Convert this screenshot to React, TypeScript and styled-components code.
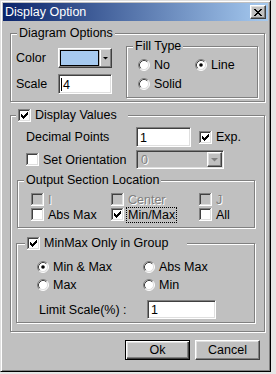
import React from 'react';
import styled, { createGlobalStyle, css } from 'styled-components';

const GlobalStyle = createGlobalStyle`
  html, body {
    margin: 0;
    padding: 0;
    background: #e6e6e6;
  }
  body {
    font-family: "Liberation Sans", Arial, sans-serif;
    font-size: 12.5px;
    color: #000;
  }
`;

const raised = css`
  border: 1px solid;
  border-color: #fff #404040 #404040 #fff;
  box-shadow: inset -1px -1px #808080, inset 1px 1px #dfdfdf;
`;

const sunken = css`
  border: 1px solid;
  border-color: #808080 #fff #fff #808080;
  box-shadow: inset 1px 1px #404040, inset -1px -1px #dfdfdf;
`;

const Check = ({ checked, disabled }: { checked?: boolean; disabled?: boolean }) => (
  <svg width="13" height="13" viewBox="0 0 13 13" shapeRendering="crispEdges" style={{ flex: 'none' }}>
    <rect width="13" height="13" fill="#fff" />
    <rect width="12" height="12" fill="#808080" />
    <rect x="1" y="1" width="11" height="11" fill="#dfdfdf" />
    <rect x="1" y="1" width="10" height="10" fill="#404040" />
    <rect x="2" y="2" width="9" height="9" fill={disabled ? '#c0c0c0' : '#fff'} />
    {checked && (
      <path
        d="M9 3h1v1H9z M8 4h2v1H8z M3 5h1v1H3z M7 5h3v1H7z M3 6h2v1H3z M6 6h3v1H6z M3 7h5v1H3z M4 8h3v1H4z M5 9h1v1H5z"
        fill="#000"
      />
    )}
  </svg>
);

const Radio = ({ checked }: { checked?: boolean }) => (
  <svg width="12" height="12" viewBox="0 0 12 12" style={{ flex: 'none' }}>
    <circle cx="6" cy="6" r="5" fill="#fff" />
    <path d="M2.11 9.89 A5.5 5.5 0 0 1 9.89 2.11" fill="none" stroke="#808080" />
    <path d="M9.89 2.11 A5.5 5.5 0 0 1 2.11 9.89" fill="none" stroke="#fff" />
    <path d="M2.82 9.18 A4.5 4.5 0 0 1 9.18 2.82" fill="none" stroke="#404040" />
    <path d="M9.18 2.82 A4.5 4.5 0 0 1 2.82 9.18" fill="none" stroke="#dfdfdf" />
    {checked && <circle cx="6" cy="6" r="1.8" fill="#000" />}
  </svg>
);

const Arrow = ({ w, color }: { w: number; color: string }) => (
  <svg width={w} height={Math.ceil(w / 2)} viewBox={`0 0 ${w} ${Math.ceil(w / 2)}`}>
    <polygon points={`0,0 ${w},0 ${w / 2},${w / 2}`} fill={color} />
  </svg>
);

export default function App() {
  return (
    <>
      <GlobalStyle />
      <Window>
        <TitleBar>
          <TitleText>Display Option</TitleText>
          <CloseButton>
            <svg width="8" height="7" viewBox="0 0 8 7" shapeRendering="crispEdges">
              <path
                d="M0 0h2v1H0z M6 0h2v1H6z M1 1h2v1H1z M5 1h2v1H5z M2 2h4v1H2z M3 3h2v1H3z M2 4h4v1H2z M1 5h2v1H1z M5 5h2v1H5z M0 6h2v1H0z M6 6h2v1H6z"
                fill="#000"
              />
            </svg>
          </CloseButton>
        </TitleBar>

        <Body>
          <Group $w={255} $h={69}>
            <Legend $left={6}>Diagram Options</Legend>
            <DiagramBody>
              <FieldGrid>
                <span>Color</span>
                <ColorButton>
                  <Swatch />
                  <ComboArrow>
                    <Arrow w={5} color="#000" />
                  </ComboArrow>
                </ColorButton>
                <span>Scale</span>
                <TextBox $w={54} $h={20}>
                  <Caret />4
                </TextBox>
              </FieldGrid>

              <Group $w={132} $h={52} style={{ marginLeft: 14 }}>
                <Legend $left={6}>Fill Type</Legend>
                <FillGrid>
                  <Option>
                    <Radio /> No
                  </Option>
                  <Option>
                    <Radio checked /> Line
                  </Option>
                  <Option>
                    <Radio /> Solid
                  </Option>
                </FillGrid>
              </Group>
            </DiagramBody>
          </Group>

          <Group $w={255} $h={217} $mt={13} $pad="11px 0 0 0">
            <Legend $left={5} $pr={11}>
              <Check checked />
              Display Values
            </Legend>

            <ValueRow $h={20}>
              <RowLabel $w={110}>Decimal Points</RowLabel>
              <TextBox $w={55} $h={20}>1</TextBox>
              <Option style={{ marginLeft: 8 }}>
                <Check checked />
                Exp.
              </Option>
            </ValueRow>

            <ValueRow $h={19} $mt={3}>
              <Option style={{ width: 110 }}>
                <Check />
                Set Orientation
              </Option>
              <SelectBox>
                <Dim>0</Dim>
                <SelectButton>
                  <Arrow w={7} color="#808080" />
                </SelectButton>
              </SelectBox>
            </ValueRow>

            <Group $w={238} $h={48} $mt={11} $ml={6}>
              <Legend $left={6}>Output Section Location</Legend>
              <OutputGrid>
                <Option>
                  <Check disabled />
                  <Dim>I</Dim>
                </Option>
                <Option>
                  <Check disabled />
                  <Dim>Center</Dim>
                </Option>
                <Option>
                  <Check disabled />
                  <Dim>J</Dim>
                </Option>
                <Option>
                  <Check />
                  Abs Max
                </Option>
                <Option>
                  <Check checked />
                  <Focused>Min/Max</Focused>
                </Option>
                <Option>
                  <Check />
                  All
                </Option>
              </OutputGrid>
            </Group>

            <Group $w={239} $h={80} $mt={15} $ml={5}>
              <Legend $left={8} $pr={19}>
                <Check checked />
                MinMax Only in Group
              </Legend>
              <RadioGrid>
                <Option>
                  <Radio checked /> Min &amp; Max
                </Option>
                <Option>
                  <Radio /> Abs Max
                </Option>
                <Option>
                  <Radio /> Max
                </Option>
                <Option>
                  <Radio /> Min
                </Option>
              </RadioGrid>
              <LimitRow>
                <RowLabel $w={108}>Limit Scale(%) :</RowLabel>
                <TextBox $w={69} $h={19}>1</TextBox>
              </LimitRow>
            </Group>
          </Group>

          <ButtonRow>
            <PushButton $default>Ok</PushButton>
            <PushButton>Cancel</PushButton>
          </ButtonRow>
        </Body>
      </Window>
    </>
  );
}

const Window = styled.div`
  width: 271px;
  height: 372px;
  box-sizing: border-box;
  background: #c0c0c0;
  border: 1px solid;
  border-color: #dfdfdf #000 #000 #dfdfdf;
  box-shadow: inset 1px 1px #fff, inset -1px -1px #808080;
  padding: 2px;
  display: flex;
  flex-direction: column;
`;

const TitleBar = styled.div`
  height: 18px;
  flex: none;
  display: flex;
  align-items: center;
  justify-content: space-between;
  padding: 0 2px 0 2px;
  background: linear-gradient(to right, #0a246a, #a6caf0);
`;

const TitleText = styled.span`
  color: #fff;
  font-size: 12.5px;
  line-height: 18px;
  white-space: nowrap;
`;

const CloseButton = styled.div`
  width: 16px;
  height: 14px;
  box-sizing: border-box;
  background: #c0c0c0;
  ${raised};
  display: flex;
  align-items: center;
  justify-content: center;
`;

const Body = styled.div`
  display: flex;
  flex-direction: column;
  align-items: flex-start;
  padding: 12px 0 0 7px;
`;

const Group = styled.div<{ $w: number; $h: number; $mt?: number; $ml?: number; $pad?: string }>`
  position: relative;
  flex: none;
  box-sizing: border-box;
  width: ${(p) => p.$w}px;
  height: ${(p) => p.$h}px;
  margin-top: ${(p) => p.$mt ?? 0}px;
  margin-left: ${(p) => p.$ml ?? 0}px;
  padding: ${(p) => p.$pad ?? '0'};
  border: 1px solid #808080;
  box-shadow: inset 1px 1px #fff, 1px 1px #fff;
`;

const Legend = styled.div<{ $left: number; $pr?: number }>`
  position: absolute;
  top: -8px;
  left: ${(p) => p.$left}px;
  padding: 0 ${(p) => p.$pr ?? 2}px 0 2px;
  line-height: 15px;
  background: #c0c0c0;
  display: flex;
  align-items: center;
  gap: 4px;
  white-space: nowrap;
`;

const DiagramBody = styled.div`
  display: flex;
  align-items: flex-start;
  padding: 12px 0 0 5px;
`;

const FieldGrid = styled.div`
  display: grid;
  grid-template-columns: 42px 54px;
  grid-auto-rows: 20px;
  row-gap: 6px;
  align-items: center;
  margin-top: 2px;
`;

const ColorButton = styled.div`
  height: 20px;
  box-sizing: border-box;
  ${raised};
  display: flex;
  padding: 1px;
`;

const Swatch = styled.div`
  flex: 1;
  border: 1px solid #000;
  background: #a6caf0;
  margin-right: 1px;
`;

const ComboArrow = styled.div`
  width: 9px;
  border-left: 1px solid #fff;
  display: flex;
  align-items: center;
  justify-content: center;
`;

const TextBox = styled.div<{ $w: number; $h: number }>`
  width: ${(p) => p.$w}px;
  height: ${(p) => p.$h}px;
  box-sizing: border-box;
  ${sunken};
  background: #fff;
  padding: 1px 0 0 3px;
  line-height: 14px;
  display: flex;
  align-items: center;
`;

const Caret = styled.span`
  width: 1px;
  height: 13px;
  background: #000;
  margin: 0 1px 0 -1px;
`;

const FillGrid = styled.div`
  display: grid;
  grid-template-columns: 57px auto;
  grid-auto-rows: 19px;
  padding: 8px 0 0 11px;
`;

const Option = styled.label`
  display: flex;
  align-items: center;
  gap: 4px;
  white-space: nowrap;
`;

const ValueRow = styled.div<{ $h: number; $mt?: number }>`
  display: flex;
  align-items: center;
  height: ${(p) => p.$h}px;
  margin: ${(p) => p.$mt ?? 0}px 0 0 15px;
`;

const RowLabel = styled.span<{ $w: number }>`
  width: ${(p) => p.$w}px;
  white-space: nowrap;
`;

const SelectBox = styled.div`
  width: 88px;
  height: 19px;
  box-sizing: border-box;
  ${sunken};
  background: #c0c0c0;
  display: flex;
  align-items: center;
  justify-content: space-between;
  padding: 0 1px 0 4px;
`;

const SelectButton = styled.div`
  width: 15px;
  height: 15px;
  box-sizing: border-box;
  ${raised};
  display: flex;
  align-items: center;
  justify-content: center;
`;

const Dim = styled.span`
  color: #808080;
  text-shadow: 1px 1px #fff;
`;

const Focused = styled.span`
  border: 1px dotted #000;
  padding: 0 1px;
  margin-left: -2px;
  line-height: 14px;
`;

const OutputGrid = styled.div`
  display: grid;
  grid-template-columns: 80px 88px auto;
  grid-auto-rows: 15px;
  padding: 11px 0 0 13px;
`;

const RadioGrid = styled.div`
  display: grid;
  grid-template-columns: 106px auto;
  grid-auto-rows: 18px;
  padding: 14px 0 0 20px;
`;

const LimitRow = styled.div`
  display: flex;
  align-items: center;
  height: 19px;
  margin: 6px 0 0 22px;
`;

const ButtonRow = styled.div`
  align-self: stretch;
  display: flex;
  justify-content: flex-end;
  gap: 5px;
  margin-top: 8px;
  padding-right: 8px;
`;

const PushButton = styled.button<{ $default?: boolean }>`
  width: 65px;
  height: 20px;
  box-sizing: border-box;
  background: #c0c0c0;
  font: inherit;
  color: #000;
  padding: 0;
  ${(p) =>
    p.$default
      ? css`
          border: 1px solid #000;
          box-shadow: inset 1px 1px #fff, inset -1px -1px #404040, inset -2px -2px #808080,
            inset 2px 2px #dfdfdf;
        `
      : raised};
`;
